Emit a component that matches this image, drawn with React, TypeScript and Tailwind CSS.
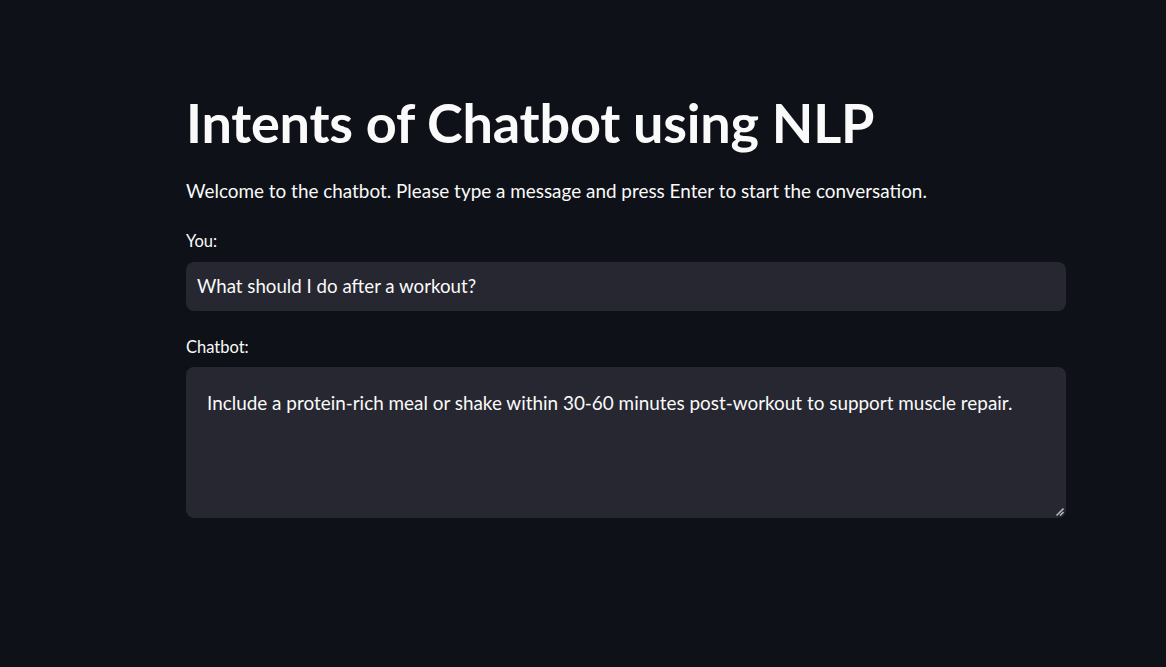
export default function App() {
  const font = { fontFamily: '"Lato", "Noto Sans", sans-serif' };
  return (
    <div className="min-h-[667px] w-full bg-[#0e1117] text-[#fafafa]" style={font}>
      <div className="w-[880px] pt-[91px] ml-[186px]">
        <h1 className="text-[54px] font-bold leading-[64px] tracking-[-0.2px]">Intents of Chatbot using NLP</h1>
        <p className="mt-[22px] text-[18.9px] leading-[28px]">
          Welcome to the chatbot. Please type a message and press Enter to start the conversation.
        </p>
        <div className="mt-[24px] text-[16.5px] leading-[24px]">You:</div>
        <div className="mt-[9px] h-[49px] rounded-[8px] bg-[#262730] px-[11px] flex items-center text-[18.7px]">
          What should I do after a workout?
        </div>
        <div className="mt-[24px] text-[16.5px] leading-[24px]">Chatbot:</div>
        <div className="relative mt-[8px] h-[151px] rounded-[8px] bg-[#262730] px-[21px] pt-[22px] text-[18.9px] leading-[28px]">
          Include a protein-rich meal or shake within 30-60 minutes post-workout to support muscle repair.
          <svg className="absolute right-[2px] bottom-[2px]" width="10" height="10" viewBox="0 0 10 10">
            <path d="M9.5 2.5 L2.5 9.5 M9.5 6 L6 9.5" stroke="#b0b0b6" strokeWidth="1.6" />
          </svg>
        </div>
      </div>
    </div>
  );
}
